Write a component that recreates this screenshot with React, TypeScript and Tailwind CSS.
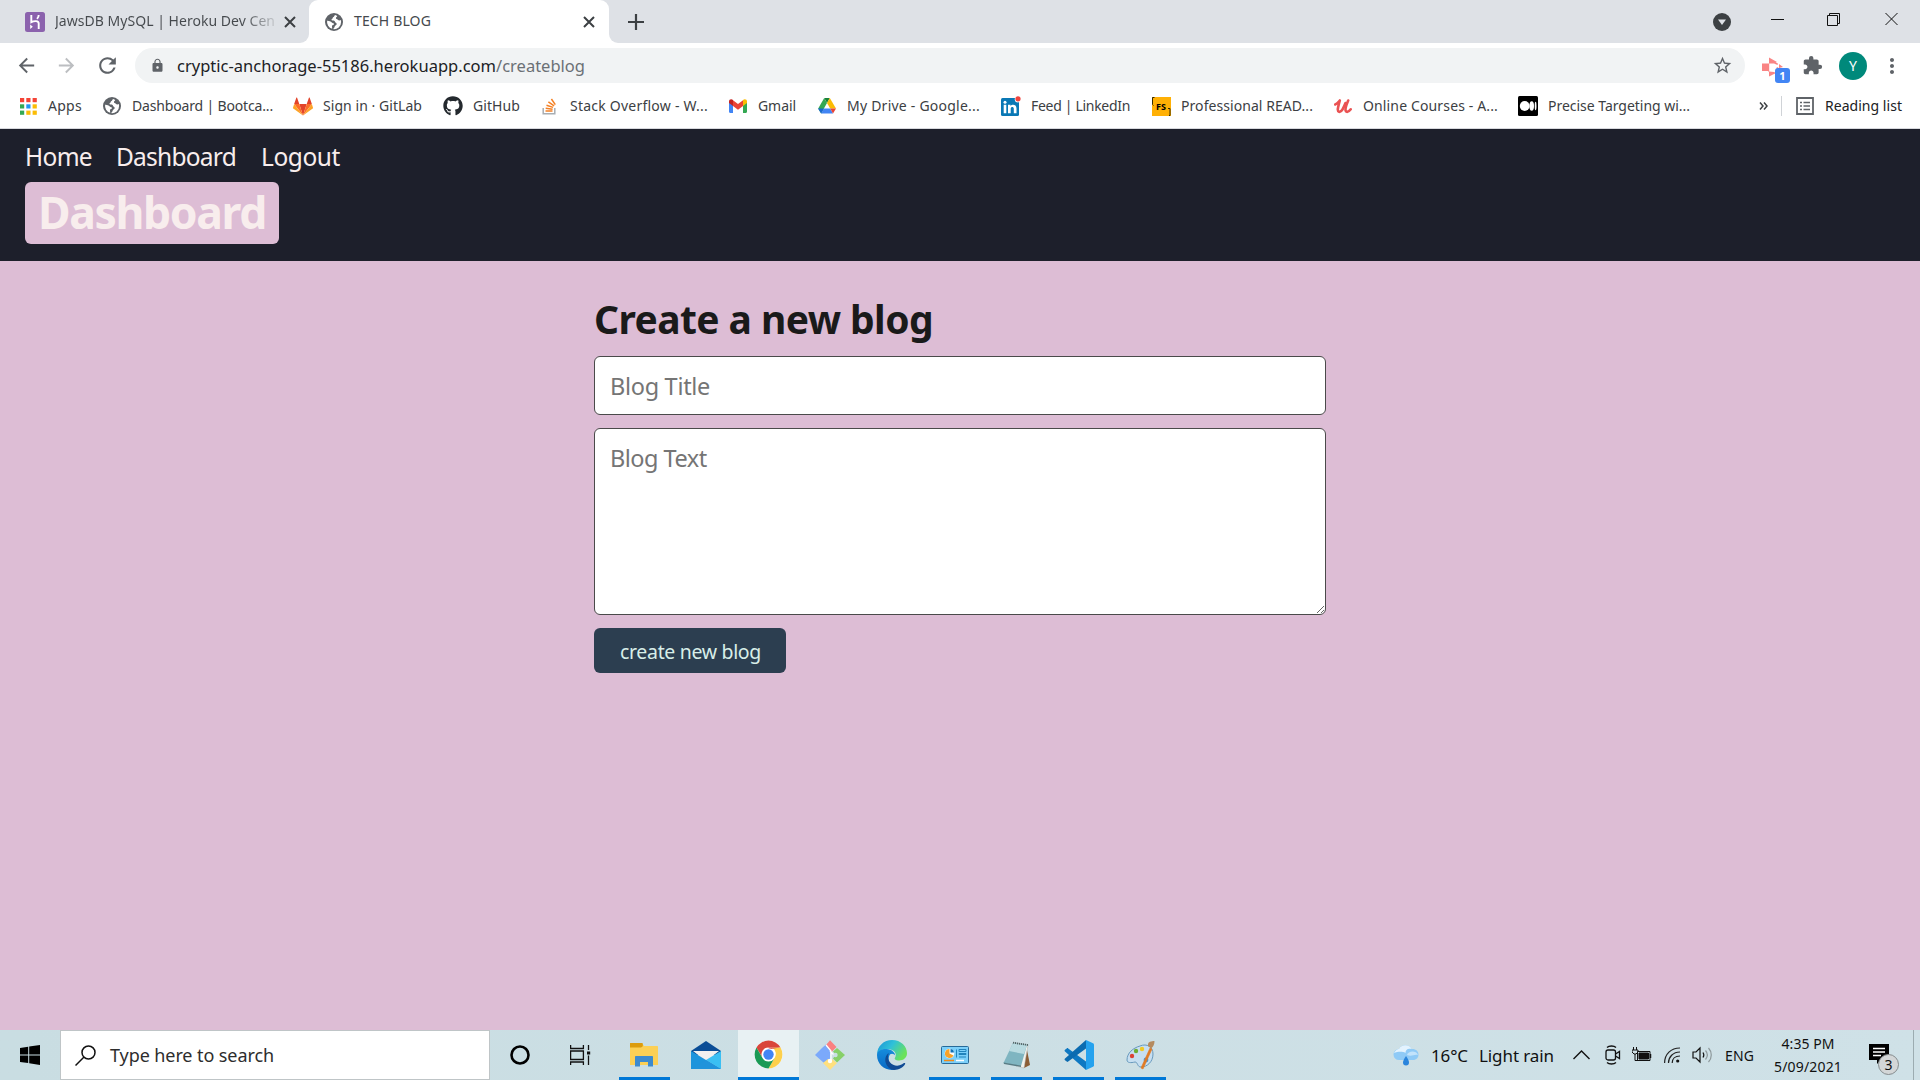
import React, { useLayoutEffect, useRef, useState } from "react";
import { MdArrowBack, MdArrowForward, MdExtension, MdLock, MdMoreVert, MdStarBorder, MdRefresh } from "react-icons/md";
import { FaGithub } from "react-icons/fa";

/** Single-line label whose tracking adapts so that it fills the given width. */
function Fit({ w, children, className = "" }: { w: number; children: string; className?: string }) {
  const ref = useRef<HTMLSpanElement>(null);
  const [tracking, setTracking] = useState(0);
  useLayoutEffect(() => {
    const el = ref.current;
    if (!el) return;
    el.style.letterSpacing = "0px";
    const natural = el.getBoundingClientRect().width;
    const next = (w - natural) / children.length;
    el.style.letterSpacing = `${next}px`;
    setTracking(next);
  }, [w, children]);
  return (
    <span ref={ref} className={`inline-block shrink-0 whitespace-pre ${className}`} style={{ letterSpacing: `${tracking}px` }}>
      {children}
    </span>
  );
}

const Globe = () => (
  <svg width="18" height="18" viewBox="0 0 18 18">
    <circle cx="9" cy="9" r="9" fill="#5f6368" />
    <path d="M10.2 1.9c-1.2.5-.6 1.6-1.8 2.2-1 .5-.4 1.5-1.4 1.9-1.1.4-.5 1.6.6 1.5 1.6-.1 2.4.4 2.5 1.6.1 1 1.6.6 1.6 1.8 0 1.400-1.600 1.300-1.900 2.400-.2 1-.8 2.100-1.800 2.800A7.100 7.100 0 0 0 16.100 9c0-.7-.1-1.300-.3-1.900-1 .7-2.500.5-3-.4-.5-.8-1.900-.5-1.900-1.700 0-1 1.100-.9 1.300-2-.5-.6-1.200-.9-2-1.100Z" fill="#fff" />
    <path d="M2.100 7.800c1.500-.2 3.700.6 4.700 1.800.7.900 2.500.4 2.200 1.700-.3 1-1.700.5-2 1.600-.2.800.3 1.400.2 2.900A7.100 7.100 0 0 1 2.100 7.800Z" fill="#fff" />
  </svg>
);

const Close = () => (
  <svg width="12" height="12" viewBox="0 0 12 12" stroke="#3c4043" strokeWidth="2">
    <path d="M1 1l10 10M11 1L1 11" />
  </svg>
);

const Heroku = () => (
  <svg width="20" height="20" viewBox="0 0 20 20">
    <rect width="20" height="20" rx="2.500" fill="#8b62ad" />
    <path d="M6.300 3v7.200c3-1.500 7.400-1.700 7.400 1.300V17M13.700 3c0 1.500-.6 2.700-1.700 3.800" fill="none" stroke="#fff" strokeWidth="1.900" />
    <path d="M5.200 12.500L7.800 14.800 5.200 17z" fill="#fff" />
  </svg>
);

const AppsIcon = () => (
  <svg width="17" height="17" viewBox="0 0 17 17">
    {["#f44336", "#f44336", "#f44336", "#34a853", "#2196f3", "#fbbc05", "#34a853", "#fbbc05", "#fbbc05"].map((c, i) => (
      <rect key={i} x={(i % 3) * 6.300} y={Math.floor(i / 3) * 6.300} width="4.200" height="4.200" fill={c} />
    ))}
  </svg>
);

const Gitlab = () => (
  <svg width="21" height="19" viewBox="0 0 21 19">
    <path d="M10.500 19L14.400 7H6.600z" fill="#e24329" />
    <path d="M10.500 19L6.600 7H1.200zM10.500 19L14.400 7h5.400z" fill="#fc6d26" />
    <path d="M1.200 7L0 10.700c-.1.400 0 .8.300 1L10.500 19zM19.800 7l1.200 3.700c.1.400 0 .8-.3 1L10.500 19z" fill="#fca326" />
    <path d="M1.200 7h5.400L4.300.400c-.1-.4-.6-.4-.8 0zM19.800 7h-5.400L16.700.400c.1-.4.6-.4.8 0z" fill="#e24329" />
  </svg>
);

const StackIcon = () => (
  <svg width="16" height="18" viewBox="0 0 16 18" fill="none">
    <path d="M1.200 11v5.800h11.600V11" stroke="#a8adb2" strokeWidth="1.500" />
    <path d="M3.500 14h7M3.700 11.300l6.900.9M4.500 8.200l6.600 2.200M6.400 4.900l5.700 3.900M9.400 2l3.900 5.600" stroke="#f48024" strokeWidth="1.500" />
  </svg>
);

const Gmail = () => (
  <svg width="18" height="14" viewBox="0 0 18 14">
    <path d="M0 2.500V12.800C0 13.500.5 14 1.200 14H4V6z" fill="#4285f4" />
    <path d="M18 2.500V12.800c0 .7-.5 1.200-1.200 1.200H14V6z" fill="#34a853" />
    <path d="M4 1.200V7l5 3.700L14 7V1.200L9 5z" fill="#ea4335" />
    <path d="M0 2.500C0 .4 2.200-.5 4 .9V7L0 4z" fill="#c5221f" />
    <path d="M18 2.500C18 .4 15.800-.5 14 .9V7l4-3z" fill="#fbbc04" />
  </svg>
);

const Drive = () => (
  <svg width="18" height="16" viewBox="0 0 18 16">
    <path d="M6.200 0h5.600L9 5z" fill="#188038" />
    <path d="M6.200 0L9 5 3.100 15.500.200 10.600z" fill="#34a853" />
    <path d="M11.800 0L18 10.600h-5.800L9 5z" fill="#fbbc04" />
    <path d="M5.900 10.600h6.300l2.800 5H3.100z" fill="#4285f4" />
    <path d="M0 10.600h5.900l-2.800 5z" fill="#1967d2" />
    <path d="M12.200 10.600H18l-3 5z" fill="#ea4335" />
  </svg>
);

const LinkedIn = () => (
  <svg width="20" height="20" viewBox="0 0 20 20">
    <rect x="0" y="2" width="18" height="18" rx="1.500" fill="#0a78b5" />
    <path d="M2.700 8.800h2.600v8.400H2.700zM7 8.800h2.500v1.100c1.300-2 6-1.900 6 2.300v5h-2.700v-4.500c0-2.300-3.100-2.200-3.100 0v4.500H7z" fill="#fff" />
    <circle cx="4" cy="6.200" r="1.500" fill="#fff" />
    <circle cx="17" cy="3.200" r="3.200" fill="#fff" />
    <circle cx="17" cy="2.800" r="2.600" fill="#f0443e" />
  </svg>
);

const FsIcon = () => (
  <span className="relative flex h-[19px] w-[19px] items-center justify-center bg-[#ffb005] text-[9px] leading-none font-bold text-black">
    FS
    <svg className="absolute inset-0" width="19" height="19" viewBox="0 0 19 19" fill="none" stroke="#332900" strokeWidth="1">
      <path d="M2.500.5H.5v7l1 1M16 11.500h2v7h-1" />
    </svg>
  </span>
);

const Udemy = () => (
  <svg width="18" height="15" viewBox="0 0 18 15" fill="none" stroke="#ea5252" strokeLinecap="round" strokeLinejoin="round">
    <path d="M1.300 5.500C3.500 4.800 4.700 2.800 5.800 1.500 4.800 5.800 2.300 12 5 12.800c2.700.8 4.700-4.400 6.500-8.800" strokeWidth="2.600" />
    <path d="M14.200 1.500c-1.600 3.700-4.300 10.700-1.500 11.300 1.700.300 3-1.100 4-2.500" strokeWidth="2.600" />
  </svg>
);

const Medium = () => (
  <svg width="20" height="20" viewBox="0 0 20 20">
    <rect width="20" height="20" rx="1.500" fill="#000" />
    <circle cx="6.700" cy="10" r="4.900" fill="#fff" />
    <ellipse cx="13.700" cy="10" rx="2.300" ry="4.700" fill="#fff" />
    <ellipse cx="17.600" cy="10" rx=".9" ry="4.300" fill="#fff" />
  </svg>
);

const bookmarks = [
  { icon: <AppsIcon />, label: "Apps", w: 34, cell: "w-[84px]" },
  { icon: <Globe />, label: "Dashboard | Bootca...", w: 141, cell: "w-[191px]" },
  { icon: <Gitlab />, label: "Sign in · GitLab", w: 99, cell: "w-[150px]" },
  { icon: <FaGithub size={20} color="#24292e" />, label: "GitHub", w: 47, cell: "w-[97px]" },
  { icon: <StackIcon />, label: "Stack Overflow - W...", w: 138, cell: "w-[188px]" },
  { icon: <Gmail />, label: "Gmail", w: 38, cell: "w-[89px]" },
  { icon: <Drive />, label: "My Drive - Google...", w: 133, cell: "w-[184px]" },
  { icon: <LinkedIn />, label: "Feed | LinkedIn", w: 99, cell: "w-[150px]" },
  { icon: <FsIcon />, label: "Professional READ...", w: 132, cell: "w-[182px]" },
  { icon: <Udemy />, label: "Online Courses - A...", w: 135, cell: "w-[185px]" },
  { icon: <Medium />, label: "Precise Targeting wi...", w: 142, cell: "w-[235px]" },
];

function TabStrip() {
  return (
    <div className="flex h-[43px] bg-white">
      <div className="flex h-full w-[309px] items-center rounded-br-[9px] bg-[#dee1e6] pl-[25px]">
        <Heroku />
        <Fit w={220} className="ml-[10px] bg-linear-to-r from-[#45494d] from-85% to-[#c4c7cb] bg-clip-text pb-px text-[14px] leading-[20px] text-transparent">JawsDB MySQL | Heroku Dev Cen</Fit>
        <span className="ml-[9px]"><Close /></span>
      </div>
      <div className="flex w-[300px] bg-[#dee1e6]">
        <div className="flex w-[300px] items-center rounded-t-[9px] bg-white pl-[16px]">
          <Globe />
          <Fit w={77} className="ml-[11px] pb-[2px] text-[14px] leading-[20px] text-[#45494d]">TECH BLOG</Fit>
          <span className="ml-[152px]"><Close /></span>
        </div>
      </div>
      <div className="flex flex-1 items-center rounded-bl-[9px] bg-[#dee1e6] pl-[19px]">
        <svg width="16" height="16" viewBox="0 0 16 16" stroke="#3c4043" strokeWidth="2.200"><path d="M8 0v16M0 8h16" /></svg>
        <svg className="mr-[40px] ml-auto" width="18" height="18" viewBox="0 0 18 18">
          <circle cx="9" cy="9" r="9" fill="#3c4043" />
          <path d="M5 6.500h8L9 12z" fill="#dee1e6" />
        </svg>
        <svg className="mr-[1px] mb-[6px]" width="148" height="14" viewBox="0 0 148 14" fill="none" stroke="#111">
          <path d="M0 7.500h13M56.500 3.500h10v10h-10zM58.500 3.500V1.500h10v10h-2M114.500 1l12 12M126.500 1l-12 12" />
        </svg>
      </div>
    </div>
  );
}

function Toolbar() {
  return (
    <div className="flex h-[45px] items-center bg-white text-[#5f6368]">
      <MdArrowBack size={23} className="ml-[15px]" />
      <MdArrowForward size={23} className="ml-[17px] text-[#bcbec1]" />
      <MdRefresh size={25} className="ml-[17px]" />
      <div className="ml-[15px] flex h-[35px] w-[1610px] items-center rounded-full bg-[#f1f3f4] pl-[15px]">
        <MdLock size={15} />
        <Fit w={319} className="ml-[12px] text-[16.500px] leading-[24px] text-[#202124]">cryptic-anchorage-55186.herokuapp.com</Fit>
        <Fit w={89} className="text-[16.500px] leading-[24px] text-[#6b7075]">/createblog</Fit>
        <MdStarBorder size={21} className="mr-[12px] ml-auto" />
      </div>
      <span className="relative ml-[17px] h-[30px] w-[28px]">
        <svg className="mt-[6px]" width="22" height="20" viewBox="0 0 22 20" fill="#f98484">
          <path d="M0 6.500h6v7.500H0zM7 .500l8 4.500-3 1.500H7zM7 18.500v-4l5 .5 2 1-7 3.500zM6 6.500h1.200v8H6zM12 5l4 1.500-.500 1.500-3.500-1.500zM17 7l4 3-4 1zM14 11l2-1 1 3z" />
        </svg>
        <span className="absolute top-[17px] left-[13px] flex h-[15px] w-[15px] items-center justify-center rounded-[3px] bg-[#4285f4] text-[11px] leading-none font-bold text-white">1</span>
      </span>
      <MdExtension size={21} className="ml-[12px]" />
      <span className="ml-[16px] flex h-[28px] w-[28px] items-center justify-center rounded-full bg-[#00897b] text-[14px] text-white">Y</span>
      <MdMoreVert size={24} className="ml-[13px]" />
    </div>
  );
}

function BookmarksBar() {
  return (
    <div className="flex h-[41px] items-center border-b border-[#d8d9de] bg-white pb-[4px] pl-[18px] text-[14px] leading-[20px] text-[#3c4043]">
      {bookmarks.map((b) => (
        <span key={b.label} className={`flex shrink-0 items-center ${b.cell}`}>
          <span className="flex w-[20px] shrink-0 justify-center">{b.icon}</span>
          <Fit w={b.w} className="ml-[10px]">{b.label}</Fit>
        </span>
      ))}
      <svg className="ml-[6px] shrink-0" width="9" height="8" viewBox="0 0 9 8" fill="none" stroke="#3c4043" strokeWidth="1.500"><path d="M1 .5L4 4 1 7.500M5 .5L8 4 5 7.500" /></svg>
      <span className="ml-[13px] h-[20px] w-px shrink-0 bg-[#d0d3d7]" />
      <svg className="ml-[14px] shrink-0" width="18" height="18" viewBox="0 0 18 18" fill="none" stroke="#5f6368">
        <path d="M1 1h16v16H1z" strokeWidth="1.800" />
        <path d="M4 5.500h2M4 9h2M4 12.500h2M7.500 5.500H14M7.500 9H14M7.500 12.500H14" strokeWidth="1.500" />
      </svg>
      <Fit w={77} className="ml-[11px] text-[#202124]">Reading list</Fit>
    </div>
  );
}

function BlogPage() {
  return (
    <div className="flex flex-1 flex-col bg-[#ddbdd5]">
      <header className="h-[132px] bg-[#1d1f2b] pl-[25px]">
        <nav className="flex h-[53px] items-center pt-[3px] text-[24.500px] leading-[34px] text-[#f8eded]">
          <Fit w={67}>Home</Fit>
          <Fit w={120} className="ml-[24px]">Dashboard</Fit>
          <Fit w={79} className="ml-[25px]">Logout</Fit>
        </nav>
        <h1 className="flex h-[62px] w-[254px] items-center rounded-[6px] bg-[#ddbdd5] pb-[1px] pl-[13px] text-[44.500px] leading-none font-bold text-[#f8eded]">
          <Fit w={228}>Dashboard</Fit>
        </h1>
      </header>
      <main className="mx-auto flex w-[732px] flex-col pt-[20px]">
        <h2 className="flex h-[75px] items-center text-[39px] leading-none font-bold text-[#1a1a1a]">
          <Fit w={339}>Create a new blog</Fit>
        </h2>
        <input
          placeholder="Blog Title"
          className="h-[59px] rounded-[6px] border border-[#4a4a4a] bg-white px-[15px] text-[23.500px] tracking-[-0.3px] placeholder:text-[#757575]"
        />
        <textarea
          placeholder="Blog Text"
          className="mt-[13px] h-[187px] resize rounded-[6px] border border-[#4a4a4a] bg-white px-[15px] py-[13px] text-[23.500px] leading-[32px] tracking-[-0.5px] placeholder:text-[#757575]"
        />
        <button className="mt-[13px] flex h-[45px] w-[192px] items-center rounded-[6px] bg-[#2c3e50] pt-[3px] pl-[26px] text-[19.500px] leading-none text-[#d8eee9]">
          <Fit w={141}>create new blog</Fit>
        </button>
      </main>
    </div>
  );
}

const Folder = () => (
  <svg width="30" height="30" viewBox="0 0 30 30">
    <path d="M1 4c0-.6.400-1 1-1h11l2 3H28c.6 0 1 .4 1 1v18H1z" fill="#fcd055" />
    <path d="M1 3.500c0-.4.300-.5.600-.5H13c.5 0 .8.400.8.800v2.400L12 7.500H1z" fill="#dc9c0e" />
    <path d="M6 26.500V17c0-.6.400-1 1-1h16c.6 0 1 .4 1 1v9.500h-5V22h-8v4.500z" fill="#3d8bce" />
  </svg>
);

const Mail = () => (
  <svg width="30" height="30" viewBox="0 0 30 30">
    <path d="M0 11L15 1l15 10v4H0z" fill="#0a4d96" />
    <path d="M2 11h26L15 21z" fill="#f1f0f0" />
    <path d="M0 11l30 18H0z" fill="#1d94dc" />
    <path d="M30 11v18L15 20z" fill="#3abff3" />
    <path d="M0 29l15-9 15 9z" fill="#2093db" />
  </svg>
);

const Chrome = () => (
  <svg width="29" height="29" viewBox="0 0 48 48">
    <circle cx="24" cy="24" r="23" fill="#fff" />
    <path d="M4.100 12.500A23 23 0 0 1 43.900 12.500H24A11.500 11.500 0 0 0 14 29.800z" fill="#d9453a" />
    <path d="M43.900 12.500A23 23 0 0 1 24 47l10-17.300A11.500 11.500 0 0 0 30 13z" fill="#fdd04c" />
    <path d="M43.900 12.500H24v3z" fill="#d9453a" />
    <path d="M24 47A23 23 0 0 1 4.100 12.500L14 29.800A11.500 11.500 0 0 0 34 29.800z" fill="#1a9a55" />
    <circle cx="24" cy="24" r="10.500" fill="#fff" />
    <circle cx="24" cy="24" r="8.600" fill="#4285f4" />
  </svg>
);

const Git = () => (
  <svg width="30" height="30" viewBox="0 0 30 30">
    <path d="M14 1.500l1-1.200L21.500 7 16.500 12l-1.500-1-4-6z" fill="#fa8080" />
    <path d="M7 8l4-3.500 4 6V20l-6 3-9-8z" fill="#7ba9fb" />
    <path d="M22 8l8 7-8 7.500-4-4 3-4-3-3z" fill="#87d069" />
    <path d="M8 23l5-4h4l5 4-7 7z" fill="#ffe07e" />
    <path d="M11 5l5 6v11M15 11l4 4" fill="none" stroke="#fff" strokeWidth="1.300" />
    <circle cx="15" cy="21" r="2.200" fill="#fff" />
    <circle cx="20.500" cy="15" r="2.200" fill="#cbdfe4" />
  </svg>
);

const Edge = () => (
  <svg width="30" height="30" viewBox="0 0 30 30">
    <defs>
      <linearGradient id="edgeTop" x1="0" y1="0" x2="1" y2=".5"><stop offset="0" stopColor="#1b91d6" /><stop offset=".5" stopColor="#2fc1d9" /><stop offset="1" stopColor="#6be25a" /></linearGradient>
      <linearGradient id="edgeLeft" x1="0" y1="0" x2="0" y2="1"><stop offset="0" stopColor="#168cdc" /><stop offset="1" stopColor="#0869c4" /></linearGradient>
    </defs>
    <path d="M0 15C0 6 7 0 15 0c9 0 15 6.500 15 13.300 0 4.700-3.700 7.200-7.700 7.200-4 0-5.300-1.700-4.300-2.800C21 13 16 9 10.500 9 5 9 1 12 0 15z" fill="url(#edgeTop)" />
    <path d="M0 15C0 11 5 8.500 9.500 9c5 .3 8.700 3.300 8.700 6.600-1-1.800-5-3.200-6.200.9C10 24 16 28 21 28.500 11 33 0 26 0 15z" fill="url(#edgeLeft)" />
    <path d="M11.700 13c-3 9 5 14 10.800 12.300 2-.5 3.500-1.500 4.500-2.200 1-.5 1.600.3 1 1.200C26 27.500 22 30 17 30 9 29 5 18 11.700 13z" fill="#104b94" />
  </svg>
);

const ControlPanel = () => (
  <svg width="30" height="30" viewBox="0 0 30 30">
    <rect x="1.500" y="6.500" width="27" height="17" rx="1" fill="#7cd0fa" stroke="#286a98" />
    <circle cx="9.500" cy="13.500" r="4.800" fill="#fff" />
    <path d="M9.500 13.500V9a4.500 4.500 0 1 0 4 6.500z" fill="#f6a229" />
    <path d="M10.500 12.500V9a4 4 0 0 1 3.500 3.500z" fill="#1272b6" />
    <path d="M16.500 9.500v8M19 9.500h7v2h-7zM19 13.500h7v1h-7zM19 17h7" stroke="#2183bc" fill="none" />
    <path d="M4 20.500h10" stroke="#f38a15" strokeWidth="1.500" /><path d="M16 20.500h8" stroke="#fff" strokeWidth="1.500" />
  </svg>
);

const Notepad = () => (
  <svg width="30" height="30" viewBox="0 0 30 30">
    <path d="M24 5l4 20-6 3z" fill="#8b5d35" />
    <path d="M11 3l15 2-4 23-8-2z" fill="#f2f2ec" stroke="#aaa" strokeWidth=".5" />
    <path d="M11 3l14 2-6 21-17.500-3z" fill="#7fb5c1" />
    <path d="M11 3l14 2-3 9L7 11z" fill="#b9dbe1" />
    <path d="M11 2.700l15 2.300" stroke="#536668" strokeWidth="1.800" strokeDasharray="1.200 .8" />
    <path d="M1.500 22.500L19 25.500v1.500L2 24z" fill="#587c85" />
  </svg>
);

const VsCode = () => (
  <svg width="30" height="30" viewBox="0 0 30 30">
    <path d="M22 30L1 11.500c-.6-.5-.6-1.200 0-1.700L2.700 8.400c.5-.4 1-.4 1.500 0L22 21.500z" fill="#0e78c2" />
    <path d="M22 0L1 18.500c-.6.500-.6 1.200 0 1.700l1.700 1.400c.5.400 1 .4 1.500 0L22 8.500z" fill="#0b6bb0" />
    <path d="M22 0l7 3.200c.6.300 1 .8 1 1.500v20.600c0 .7-.4 1.200-1 1.500L22 30z" fill="#25a2ee" />
  </svg>
);

const Paint = () => (
  <svg width="30" height="30" viewBox="0 0 30 30">
    <path d="M14 6c7-3 13 1 13 8 0 8-6 13-12 13-4 0-3-5-6-5-4 1-8 1-8-2C1 13 7 8 14 6z" fill="#c7dff1" stroke="#6799bd" />
    <circle cx="6" cy="16" r="2.200" fill="#dc4236" /><circle cx="10" cy="11" r="2.200" fill="#6eae32" /><circle cx="16" cy="9" r="2.200" fill="#f1c925" />
    <circle cx="20" cy="20" r="2.400" fill="#4795d7" />
    <path d="M24 8l2 1-9 20-2-1z" fill="#e07b26" stroke="#e07b26" strokeWidth=".6" />
    <path d="M22 6c0-2 0-4 3-4.500 2-.4 3-.5 3.500-.5 0 3-1 6-3.500 7.500z" fill="#b58b5f" />
  </svg>
);

const apps = [
  { icon: <Folder />, tile: "w-[51px] pr-[2px]", open: true },
  { icon: <Mail />, tile: "ml-[11px] w-[51px] pr-[2px]", open: false },
  { icon: <Chrome />, tile: "ml-[6px] w-[61px] bg-[#e8f1f3]", open: true },
  { icon: <Git />, tile: "ml-[5px] w-[52px]", open: false },
  { icon: <Edge />, tile: "ml-[10px] w-[51px]", open: false },
  { icon: <ControlPanel />, tile: "ml-[12px] w-[51px]", open: true },
  { icon: <Notepad />, tile: "ml-[11px] w-[51px]", open: true },
  { icon: <VsCode />, tile: "ml-[11px] w-[51px]", open: true },
  { icon: <Paint />, tile: "ml-[11px] w-[51px]", open: true },
];

function Taskbar() {
  return (
    <footer className="flex h-[50px] bg-linear-to-r from-[#c9dde2] to-[#cfe1e7] text-[#111]">
      <div className="flex w-[60px] items-center pl-[20px]">
        <svg width="20" height="20" viewBox="0 0 20 20"><path d="M0 3l8.200-1.200V9.400H0zM9.200 1.600L20 0v9.400H9.200zM0 10.400h8.200V18L0 17zM9.200 10.400H20V20L9.200 18.300z" /></svg>
      </div>
      <div className="flex h-[50px] w-[430px] items-center border border-[#bfc5c7] bg-white pl-[14px]">
        <svg width="21" height="21" viewBox="0 0 21 21" fill="none" stroke="#111" strokeWidth="1.500"><circle cx="13.500" cy="7.500" r="6.500" /><path d="M9 12L.500 20.500" /></svg>
        <Fit w={164} className="ml-[14px] pb-px text-[18px] leading-[26px] text-[#2d2d2d]">Type here to search</Fit>
      </div>
      <div className="flex w-[129px] items-center pl-[20px]">
        <svg width="20" height="20" viewBox="0 0 20 20" fill="none" stroke="#000" strokeWidth="2.600"><circle cx="10" cy="10" r="8.500" /></svg>
        <svg className="mt-[-1px] ml-[40px]" width="21" height="20" viewBox="0 0 21 20" fill="none" stroke="#111" strokeWidth="1.300">
          <path d="M.6 0v3.500h12.800V0M.6 6h12.800v8.500H.6zM.6 20v-3h12.800v3M18.500 0v5M18.500 10.500V20" />
          <path d="M17 6.500h3.200v3H17z" fill="#111" stroke="none" />
        </svg>
      </div>
      {apps.map((a, i) => (
        <div key={i} className={`flex shrink-0 flex-col ${a.tile} ${a.open ? "border-b-[3px] border-[#0078d7]" : ""}`}>
          <span className="mt-[10px] flex justify-center">{a.icon}</span>
        </div>
      ))}
      <div className="flex flex-1 items-center pl-[227px]">
        <svg width="26" height="22" viewBox="0 0 26 22">
          <path d="M6 16a5.500 5.500 0 0 1 0-11C8 0 17 0 18.500 5c4-.5 7 2 7 5.500 0 3-2 5.500-5.500 5.500z" fill="#8fcaf6" />
          <path d="M1 9c2-4 5-4 5-4 2-5 11-5 12.500 0-4-1-6 1-6 4C9 7 4 8 1 9z" fill="#e4f3fe" />
          <path d="M14 11c1-4 9-5 11 0-4-1-6 2-11 0z" fill="#c3e3fb" />
          <path d="M13 12c2 3 3 5 3 6.500a3 3 0 0 1-6 0c0-1.500 1-3.500 3-6.500z" fill="#2b85dc" />
        </svg>
        <Fit w={37} className="ml-[12px] pt-[2px] text-[17px] leading-[24px]">16°C</Fit>
        <Fit w={75} className="ml-[11px] pt-[2px] text-[17px] leading-[24px]">Light rain</Fit>
        <svg className="ml-[19px]" width="17" height="10" viewBox="0 0 17 10" fill="none" stroke="#111" strokeWidth="1.400"><path d="M.5 9l8-8 8 8" /></svg>
        <svg className="ml-[15px]" width="16" height="20" viewBox="0 0 16 20" fill="none" stroke="#111" strokeWidth="1.300"><rect x="1" y="5" width="9.500" height="10" rx="2" /><path d="M10.500 9l4-2.500v7l-4-2.500M2 2.500C4 .5 9 .5 11 2.500M2 17.500c2 2 7 2 9 0" /></svg>
        <svg className="ml-[11px]" width="20" height="16" viewBox="0 0 20 16" fill="none" stroke="#111"><path d="M5.500 4.500h12.500v9H5.500z" /><path d="M7 6h9.500v6H7z" fill="#111" /><path d="M18.500 7v4" strokeWidth="1.500" /><path d="M1.500 0v3M4.500 0v3M0 3h6v2L4 7H2L0 5zM3 7v6.500h3" /></svg>
        <svg className="ml-[12px]" width="17" height="17" viewBox="0 0 17 17" fill="none" stroke="#222" strokeWidth="1.200"><path d="M.6 16C.600 7 7 1 16 1M4.500 16C4.500 10 9 5 16 5M8.200 16C8.200 12 11 9 16 9" /><circle cx="13.700" cy="14" r="1.600" fill="#111" stroke="none" /></svg>
        <svg className="ml-[11px]" width="21" height="18" viewBox="0 0 21 18" fill="none" stroke="#111" strokeWidth="1.200"><path d="M1 6h3l4-4v14l-4-4H1zM11 6.500c1 1.500 1 3.500 0 5" /><path d="M13.500 4.500c2.500 3 2.500 6 0 9M16.500 2c3.700 4 3.700 10 0 14" stroke="#8d989b" /></svg>
        <Fit w={29} className="ml-[12px] pt-[1px] text-[14px] leading-[20px]">ENG</Fit>
        <div className="ml-[20px] flex w-[68px] flex-col items-center text-[14px] leading-[23px]">
          <Fit w={53}>4:35 PM</Fit>
          <Fit w={68}>5/09/2021</Fit>
        </div>
        <span className="relative ml-[27px] h-[22px] w-[20px]">
          <svg width="20" height="20" viewBox="0 0 20 20"><path d="M0 0h20v16h-8l-4 4v-4H0z" fill="#000" /><path d="M4 4.500h12M4 8h12M4 11.500h8" stroke="#fff" strokeWidth="1.300" /></svg>
          <span className="absolute top-[10px] left-[9px] flex h-[21px] w-[21px] items-center justify-center rounded-full border border-[#858b8d] bg-[#d3d6d7] text-[14px] leading-none">3</span>
        </span>
        <span className="ml-[24px] h-full w-px bg-[#9cacb1]" />
      </div>
    </footer>
  );
}

export default function App() {
  return (
    <div className="flex h-[1080px] w-[1920px] flex-col overflow-hidden font-['Noto_Sans','Open_Sans',sans-serif]">
      <TabStrip />
      <Toolbar />
      <BookmarksBar />
      <BlogPage />
      <Taskbar />
    </div>
  );
}
